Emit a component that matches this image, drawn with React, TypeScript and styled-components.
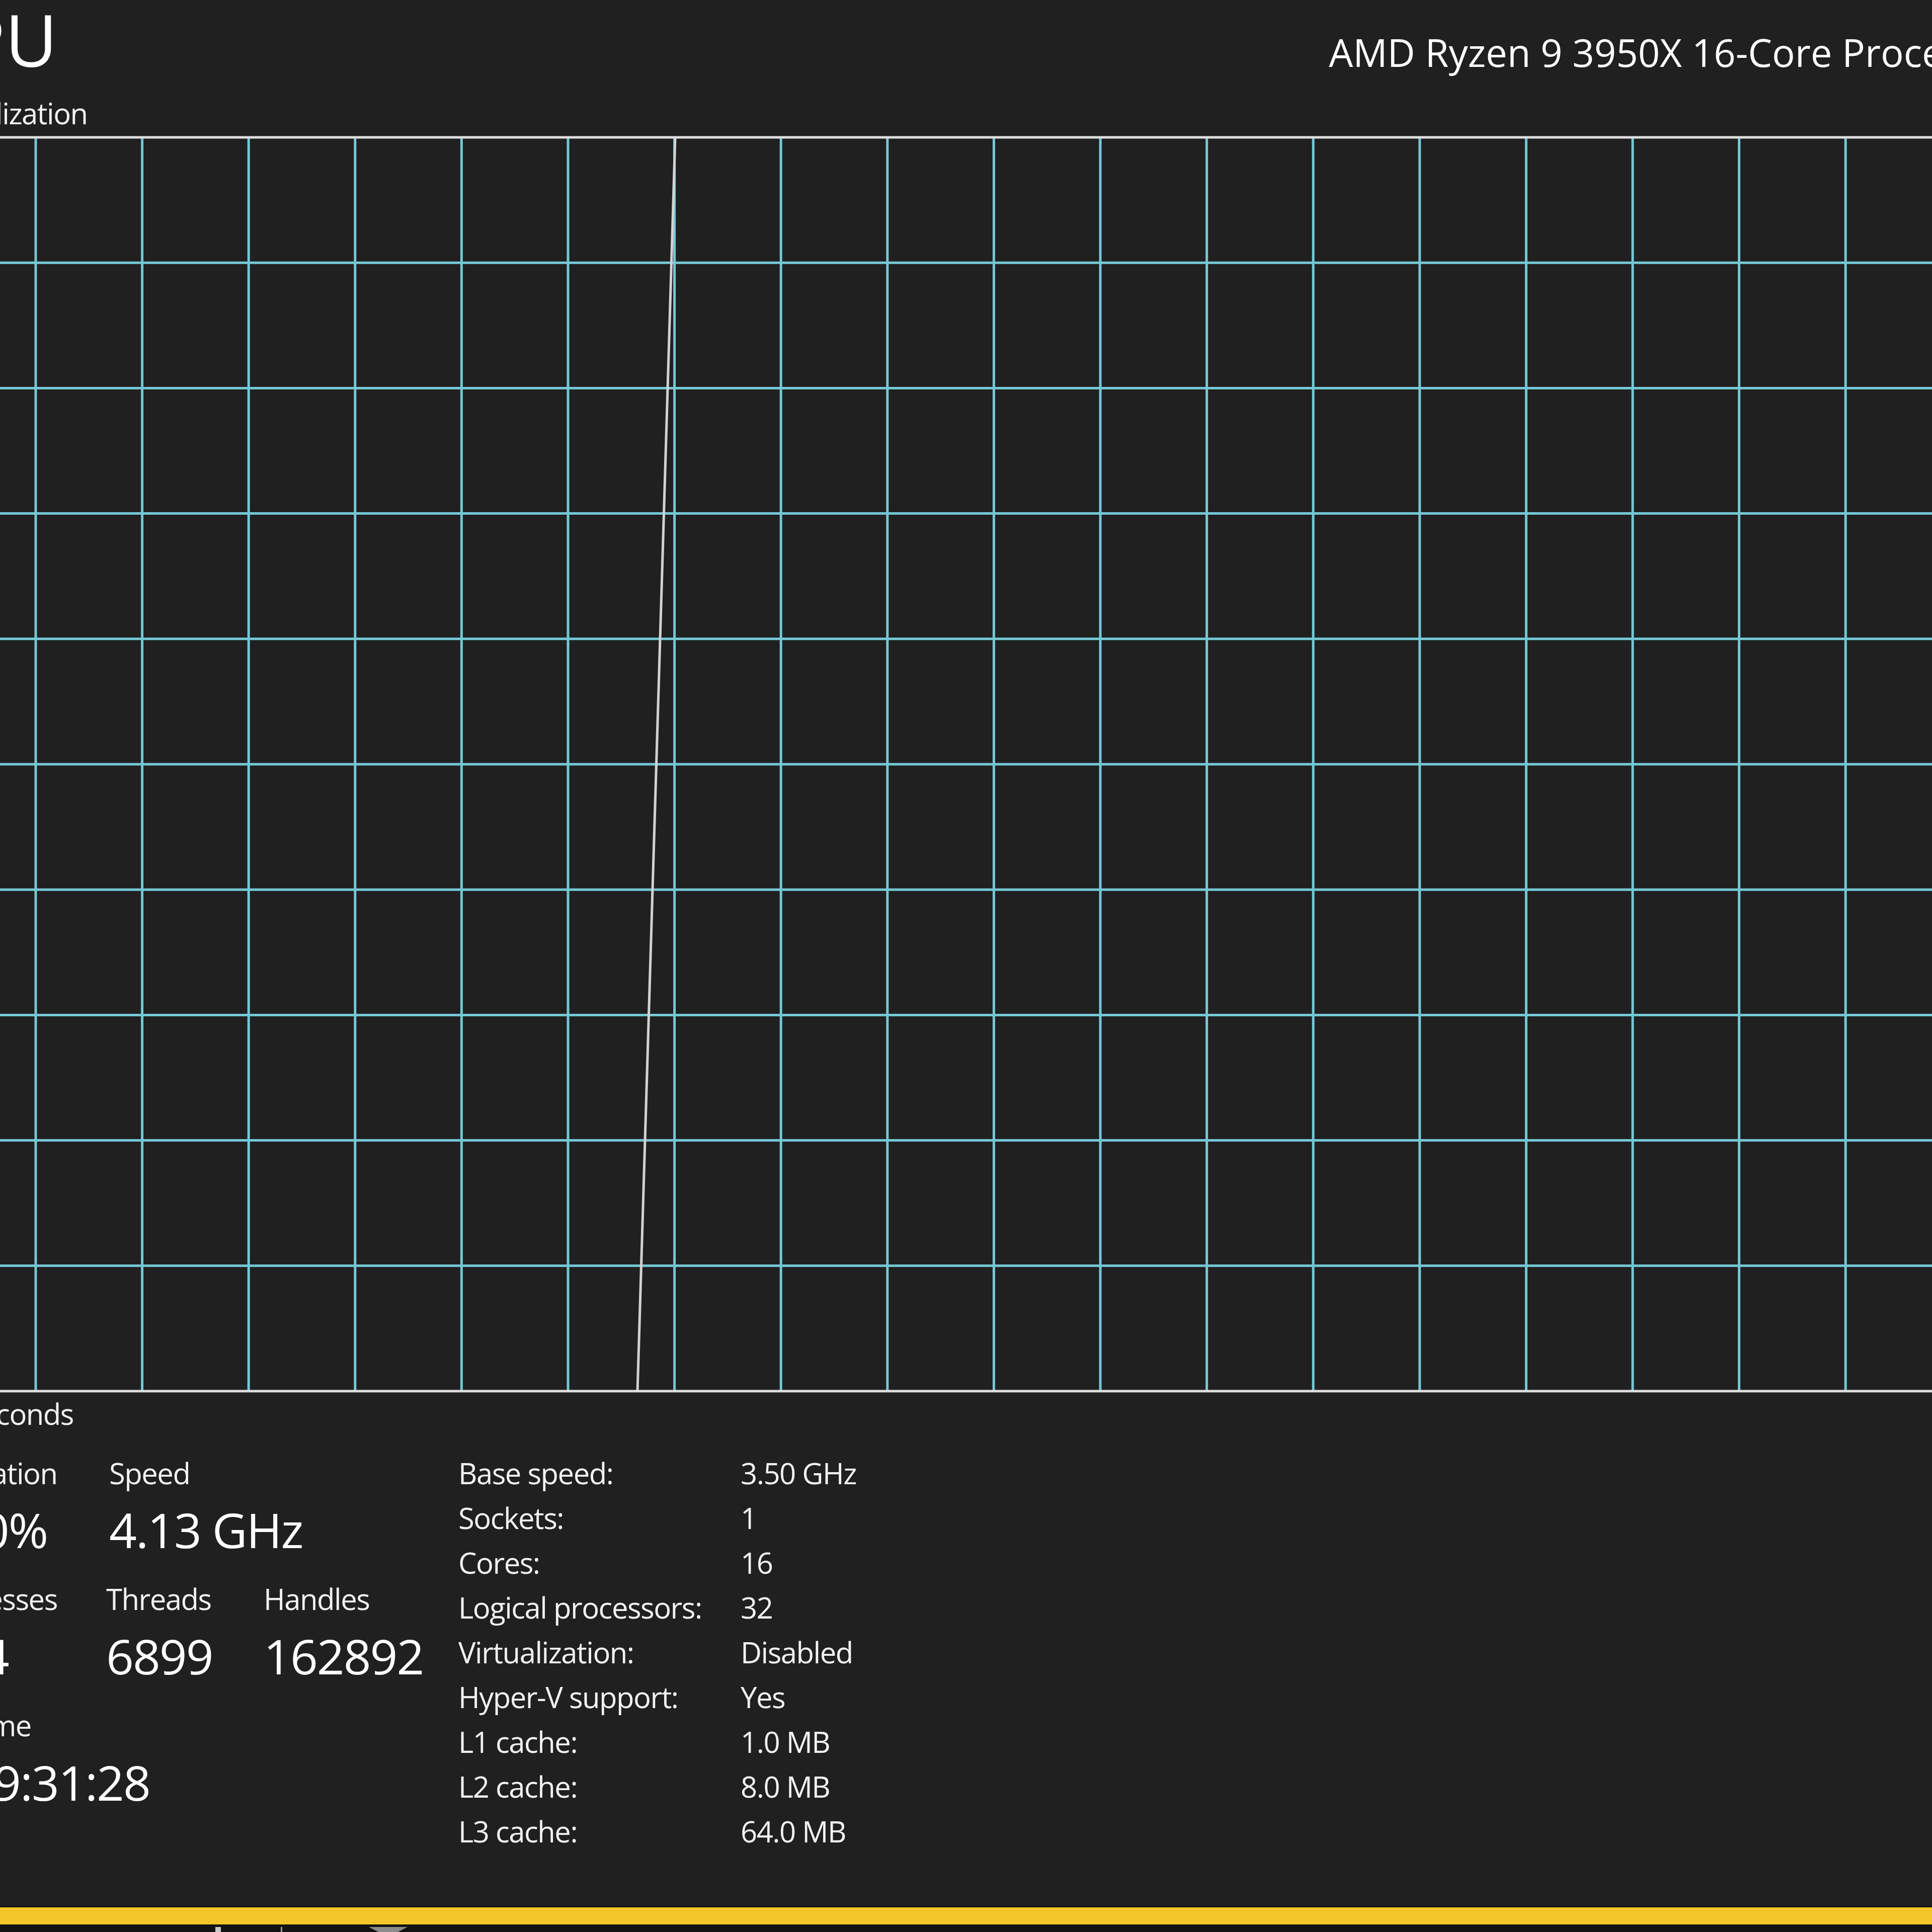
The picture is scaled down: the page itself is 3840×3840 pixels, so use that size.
import React from "react";
import styled, { createGlobalStyle } from "styled-components";

const GlobalStyle = createGlobalStyle`
    html, body {
        margin: 0;
        padding: 0;
        background: #202020;
    }
`;

const Page = styled.div`
    width: 3840px;
    height: 3840px;
    overflow: hidden;
    background: #202020;
    color: #ffffff;
    font-family: "Open Sans", "Noto Sans", sans-serif;
    display: flex;
    flex-direction: column;
`;

// the window is cropped: its left part lies off the picture
const Content = styled.div`
    width: 4154px;
    margin-left: -142px;
    display: flex;
    flex-direction: column;
`;

const Header = styled.header`
    display: flex;
    justify-content: space-between;
    align-items: baseline;
    padding-top: 6px;
`;

const Title = styled.h1`
    margin: 0 0 0 -24px;
    font-size: 143px;
    line-height: 1;
    font-weight: 400;
`;

const ProcessorName = styled.div`
    font-size: 76px;
    line-height: 1;
    white-space: nowrap;
`;

const Caption = styled.div<{ $top: number }>`
    margin-top: ${p => p.$top}px;
    font-size: 58px;
    line-height: 1;
    letter-spacing: -1.5px;
    color: #f2f2f2;
    white-space: nowrap;
`;

const GraphBox = styled.svg`
    display: block;
    margin-top: 14px;
`;

const Stats = styled.div`
    display: flex;
    margin-top: 44.5px;
`;

const LeftBlock = styled.div`
    flex: 0 0 1053px;
    padding-top: 15.5px;
    display: flex;
    flex-direction: column;
    gap: 61.6px;
`;

const StatRow = styled.div`
    display: flex;
`;

const StatCell = styled.div<{ $width?: number }>`
    flex: 0 0 ${p => (p.$width ? p.$width + "px" : "auto")};
    display: flex;
    flex-direction: column;
    gap: 35.4px;
`;

const StatLabel = styled.div`
    font-size: 58px;
    line-height: 1;
    letter-spacing: -1.5px;
    color: #f2f2f2;
    white-space: nowrap;
`;

const StatValue = styled.div`
    font-size: 96px;
    line-height: 1;
    letter-spacing: -2px;
    white-space: nowrap;
`;

const SpecTable = styled.div`
    display: grid;
    grid-template-columns: 561px auto;
    font-size: 58px;
    line-height: 89px;
    letter-spacing: -1.5px;
    color: #f2f2f2;
    white-space: nowrap;
`;

const TaskbarEdge = styled.div`
    margin-top: auto;
    height: 3px;
    background: #151515;
`;

const YellowBar = styled.div`
    height: 34px;
    background: #f5c62b;
`;

const Strip = styled.div`
    height: 15px;
    background: #131313;
    display: flex;
    align-items: flex-end;
    padding-left: 428px;
`;

const IconTip = styled.div<{ $gap: number; $w: number; $color: string }>`
    margin-left: ${p => p.$gap}px;
    width: ${p => p.$w}px;
    height: 10px;
    background: ${p => p.$color};
`;

const ArrowTip = styled.div`
    margin-left: 172px;
    width: 77px;
    height: 10px;
    background: #8c8c8c;
    clip-path: polygon(0 0, 100% 0, 75% 100%, 25% 100%);
`;

const GRAPH_W = 4154;
const GRAPH_H = 2502;

function UsageGraph() {
    const top = 5;
    const bottom = GRAPH_H - 5;
    const rowStep = (bottom - top) / 10;
    const colStep = 211.6;
    const cols: number[] = [];
    for (let x = 213 - colStep; x < GRAPH_W; x += colStep) cols.push(x);
    const rows: number[] = [];
    for (let i = 1; i < 10; i++) rows.push(top + i * rowStep);

    return (
        <GraphBox width={GRAPH_W} height={GRAPH_H} viewBox={`0 0 ${GRAPH_W} ${GRAPH_H}`}>
            {cols.map(x => (
                <line key={"c" + x} x1={x} y1={top} x2={x} y2={bottom} stroke="#74c8d6" strokeWidth={5} />
            ))}
            {rows.map(y => (
                <line key={"r" + y} x1={0} y1={y} x2={GRAPH_W} y2={y} stroke="#74c8d6" strokeWidth={5} />
            ))}
            <line x1={1484} y1={top} x2={1409} y2={bottom} stroke="#d2d2d2" strokeWidth={5} />
            <line x1={0} y1={top} x2={GRAPH_W} y2={top} stroke="#dedede" strokeWidth={5} />
            <line x1={0} y1={bottom} x2={GRAPH_W} y2={bottom} stroke="#dedede" strokeWidth={5} />
        </GraphBox>
    );
}

const specs: [string, string][] = [
    ["Base speed:", "3.50 GHz"],
    ["Sockets:", "1"],
    ["Cores:", "16"],
    ["Logical processors:", "32"],
    ["Virtualization:", "Disabled"],
    ["Hyper-V support:", "Yes"],
    ["L1 cache:", "1.0 MB"],
    ["L2 cache:", "8.0 MB"],
    ["L3 cache:", "64.0 MB"],
];

export default function App() {
    return (
        <>
            <GlobalStyle />
            <Page>
                <Content>
                    <Header>
                        <Title>CPU</Title>
                        <ProcessorName>AMD Ryzen 9 3950X 16-Core Processor</ProcessorName>
                    </Header>
                    <Caption $top={47}>% Utilization</Caption>
                    <UsageGraph />
                    <Caption $top={10.5}>60 seconds</Caption>
                    <Stats>
                        <LeftBlock>
                            <StatRow>
                                <StatCell $width={359}>
                                    <StatLabel>Utilization</StatLabel>
                                    <StatValue>100%</StatValue>
                                </StatCell>
                                <StatCell>
                                    <StatLabel>Speed</StatLabel>
                                    <StatValue>4.13 GHz</StatValue>
                                </StatCell>
                            </StatRow>
                            <StatRow>
                                <StatCell $width={353}>
                                    <StatLabel>Processes</StatLabel>
                                    <StatValue>314</StatValue>
                                </StatCell>
                                <StatCell $width={313}>
                                    <StatLabel>Threads</StatLabel>
                                    <StatValue>6899</StatValue>
                                </StatCell>
                                <StatCell>
                                    <StatLabel>Handles</StatLabel>
                                    <StatValue>162892</StatValue>
                                </StatCell>
                            </StatRow>
                            <StatRow>
                                <StatCell>
                                    <StatLabel>Up time</StatLabel>
                                    <StatValue>0:09:31:28</StatValue>
                                </StatCell>
                            </StatRow>
                        </LeftBlock>
                        <SpecTable>
                            {specs.map(([k, v]) => (
                                <React.Fragment key={k}>
                                    <span>{k}</span>
                                    <span>{v}</span>
                                </React.Fragment>
                            ))}
                        </SpecTable>
                    </Stats>
                </Content>
                <TaskbarEdge />
                <YellowBar />
                <Strip>
                    <IconTip $gap={0} $w={11} $color="#c8c8c8" />
                    <IconTip $gap={119} $w={3} $color="#9a9a9a" />
                    <ArrowTip />
                </Strip>
            </Page>
        </>
    );
}
